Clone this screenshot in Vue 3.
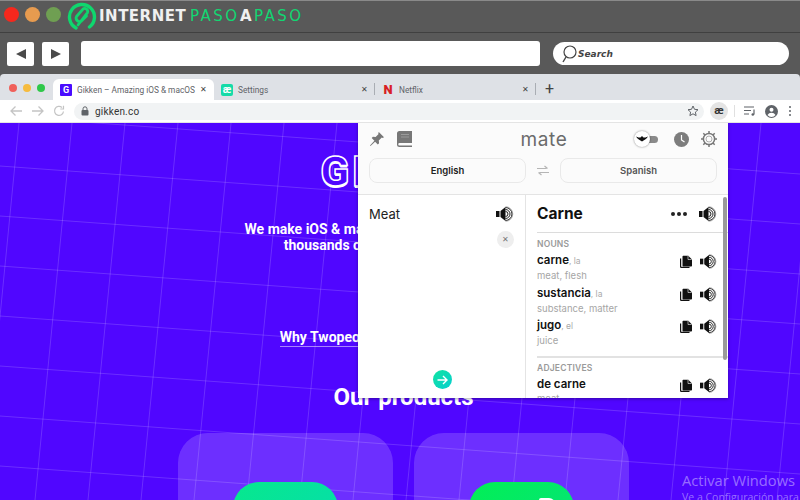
<script setup>
const tabs = [
  { title: 'Gikken – Amazing iOS & macOS', icon: 'G', kind: 'gikken', active: true },
  { title: 'Settings', icon: 'æ', kind: 'ae', active: false },
  { title: 'Netflix', icon: 'N', kind: 'netflix', active: false }
]

const nouns = [
  { word: 'carne', gender: 'la', meaning: 'meat, flesh' },
  { word: 'sustancia', gender: 'la', meaning: 'substance, matter' },
  { word: 'jugo', gender: 'el', meaning: 'juice' }
]

// slightly rotated grid behind the page
const gridV = Array.from({ length: 16 }, (_, i) => ({
  x1: 19 + i * 53,
  x2: 19 + i * 53 - 37
}))
const gridH = Array.from({ length: 9 }, (_, i) => ({
  y1: i * 50 - 7,
  y2: i * 50 + 51
}))
</script>

<template>
  <div class="screen">
    <svg class="defs" width="0" height="0">
      <symbol id="speaker" viewBox="0 0 18 18">
        <path d="M0 6h3.500v6H0z" fill="#111" />
        <path d="M4.500 6 9.500 2v14l-5-4z" fill="#111" />
        <path d="M9.500 6.500a2.500 2.500 0 0 1 0 5M9.500 4.500a4.500 4.500 0 0 1 0 9M9.500 2.500a6.500 6.500 0 0 1 0 13" fill="none" stroke="#222" stroke-width="1" />
        <path d="M9.500 1.700a7.300 7.300 0 0 1 0 14.600" fill="none" stroke="#777" stroke-width=".6" />
      </symbol>
      <symbol id="copy" viewBox="0 0 14 14">
        <path d="M1 3.500h1.200v8.300h8.300V13H2.200A1.200 1.200 0 0 1 1 11.800z" fill="#111" />
        <path d="M3.500 1.800c0-.6.500-1 1-1h4.800l3.700 3.700v6c0 .6-.5 1-1 1H4.500c-.6 0-1-.4-1-1z" fill="#111" />
        <path d="M9 1v3.500h3.500" fill="none" stroke="#fff" stroke-width=".6" />
      </symbol>
    </svg>

    <header class="site-bar">
      <div class="site-top">
        <span class="light red"></span>
        <span class="light orange"></span>
        <span class="light green"></span>
        <svg class="site-logo" width="30" height="30" viewBox="0 0 30 30">
          <path d="M9 26A12.500 12.500 0 1 1 22.500 25" fill="none" stroke="#0fd76e" stroke-width="3.400" stroke-linecap="round" />
          <path d="M11 23 20.500 10.500a3 3 0 0 0-4.500-3.500L9.500 14.500a3.500 3.500 0 0 0 5 4.500l5-5" fill="none" stroke="#0fd76e" stroke-width="2.800" stroke-linecap="round" />
        </svg>
        <span class="brand"><b class="w1">INTERNET</b><b class="g1">PASO</b><b class="w2">A</b><b class="g2">PASO</b></span>
      </div>
      <div class="site-tools">
        <button class="nav-btn"><svg width="12" height="12" viewBox="0 0 12 12"><path d="M11 1v10L1 6z" fill="#4a4a4a" /></svg></button>
        <button class="nav-btn fwd"><svg width="12" height="12" viewBox="0 0 12 12"><path d="M1 1v10l10-5z" fill="#4a4a4a" /></svg></button>
        <div class="site-address"></div>
        <div class="site-search">
          <svg width="18" height="20" viewBox="0 0 18 20"><circle cx="10" cy="8" r="6" fill="none" stroke="#444" stroke-width="1.200" /><path d="M6 13 3 18" stroke="#444" stroke-width="1.400" /></svg>
          <span>Search</span>
        </div>
      </div>
    </header>

    <section class="browser">
      <div class="tabstrip">
        <div class="mac-lights">
          <span class="dot d1"></span>
          <span class="dot d2"></span>
          <span class="dot d3"></span>
        </div>
        <div v-for="tab in tabs" :key="tab.title" class="tab" :class="{ active: tab.active }">
          <span class="fav" :class="tab.kind">{{ tab.icon }}</span>
          <span class="tab-title">{{ tab.title }}</span>
          <span class="tab-close">✕</span>
        </div>
        <span class="tab-plus">+</span>
      </div>

      <div class="urlbar">
        <svg class="ico-nav" width="14" height="12" viewBox="0 0 14 12"><path d="M13 6H2M6.500 1.500 2 6l4.500 4.500" fill="none" stroke="#c4c4c4" stroke-width="1.300" /></svg>
        <svg class="ico-nav" width="14" height="12" viewBox="0 0 14 12"><path d="M1 6h11M7.500 1.500 12 6l-4.500 4.500" fill="none" stroke="#c4c4c4" stroke-width="1.300" /></svg>
        <svg class="ico-nav" width="12" height="12" viewBox="0 0 12 12"><path d="M10.500 6.500A4.500 4.500 0 1 1 9 2.500M10.500 0.800v3.200H7.300" fill="none" stroke="#c4c4c4" stroke-width="1.200" /></svg>
        <div class="omnibox">
          <svg width="8" height="10" viewBox="0 0 8 10"><rect x="0.500" y="4" width="7" height="5.500" rx="1" fill="#5f6368" /><path d="M2 4V2.800a2 2 0 0 1 4 0V4" fill="none" stroke="#5f6368" /></svg>
          <span class="url">gikken.co</span>
          <svg class="star" width="12" height="12" viewBox="0 0 12 12"><path d="m6 1 1.500 3.300 3.500.4-2.600 2.400.7 3.500L6 8.800l-3.100 1.800.7-3.500L1 4.700l3.500-.4z" fill="none" stroke="#5f6368" /></svg>
        </div>
        <span class="ext-chip">æ</span>
        <span class="bar-sep"></span>
        <svg width="12" height="10" viewBox="0 0 12 10"><path d="M0 1h10M0 4.500h7M0 8h5" stroke="#5f6368" stroke-width="1.200" /><path d="M10 3.500V8.500" stroke="#5f6368" stroke-width="1.200" /><circle cx="8.800" cy="8.500" r="1.300" fill="#5f6368" /></svg>
        <svg class="avatar" width="13" height="13" viewBox="0 0 13 13"><circle cx="6.500" cy="6.500" r="6.500" fill="#5f6368" /><circle cx="6.500" cy="4.800" r="2" fill="#fff" /><path d="M2.500 10a4.600 4.600 0 0 1 8 0 5 5 0 0 1-8 0z" fill="#fff" /></svg>
        <span class="menu-dots"><i></i><i></i><i></i></span>
      </div>

      <main class="page">
        <svg class="grid" width="800" height="377" viewBox="0 0 800 377">
          <line v-for="(l, i) in gridV" :key="'v' + i" :x1="l.x1" y1="0" :x2="l.x2" y2="377" />
          <line v-for="(l, i) in gridH" :key="'h' + i" x1="0" :y1="l.y1" x2="800" :y2="l.y2" />
        </svg>

        <div class="page-body">
          <div class="gikken-logo">GIKKEN</div>
          <p class="intro">We make iOS &amp; macOS apps that are truly loved by<br />thousands of people all over the world</p>
          <a class="why">Why Twopeople is now officially Gikken</a>
          <h2>Our products</h2>
          <div class="cards">
            <div class="card"><div class="app-icon teal"></div></div>
            <div class="card"><div class="app-icon lime"><span class="mark"></span></div></div>
          </div>
        </div>

        <div class="activate">
          <div class="a1">Activar Windows</div>
          <div class="a2">Ve a Configuración para</div>
        </div>

        <!-- extension popup -->
        <div class="popup">
          <div class="pop-head">
            <div class="pop-top">
              <svg class="pin" width="16" height="16" viewBox="0 0 16 16"><path d="M9.800 1 15 6.200l-1.400.7-.8-.4-3 3 .3 2.700-1.300 1.200-2.700-2.700L1.500 15l-.5-.5 4.400-4.800-2.700-2.700 1.200-1.300 2.700.3 3-3-.4-.8z" fill="#777" /></svg>
              <svg class="book" width="15" height="16" viewBox="0 0 15 16"><path d="M0 2.500A2.500 2.500 0 0 1 2.500 0H15v12H2.500a1.200 1.200 0 0 0 0 2.500H15V16H2.500A2.500 2.500 0 0 1 0 13.500z" fill="#777" /><path d="M4 3.500h8M4 6h8" stroke="#aaa" stroke-width=".7" /></svg>
              <span class="mate">mate</span>
              <span class="toggle">
                <span class="knob"><svg width="12" height="6" viewBox="0 0 12 6"><path d="M0 0.500c2 1 3 1 4.500 1L6 0l1.500 1.500c1.500 0 2.500 0 4.500-1C10.500 3 8 4 6 5.500 4 4 1.500 3 0 .5z" fill="#111" /></svg></span>
                <span class="rail"></span>
              </span>
              <svg class="clock" width="15" height="15" viewBox="0 0 15 15"><circle cx="7.500" cy="7.500" r="7.500" fill="#7d7d7d" /><path d="M7.500 3v5l3 2" fill="none" stroke="#fff" stroke-width="1.200" /></svg>
              <svg class="gear" width="16" height="16" viewBox="0 0 16 16"><circle cx="8" cy="8" r="5.600" fill="none" stroke="#777" stroke-width="1.500" /><circle cx="8" cy="8" r="3" fill="none" stroke="#999" stroke-width=".8" /><path d="M8 0v2.500M8 13.500V16M0 8h2.500M13.500 8H16M2.300 2.300 4 4M12 12l1.700 1.700M2.300 13.700 4 12M12 4l1.700-1.700" stroke="#777" stroke-width="1.500" /></svg>
            </div>
            <div class="lang-row">
              <button class="lang strong">English</button>
              <svg class="swap" width="14" height="11" viewBox="0 0 14 11"><path d="M1 3.500h9.500M8.500 1l3 2.500M13 7.500H3.500M5.500 10l-3-2.500" fill="none" stroke="#b5b5b5" stroke-width="1.200" /></svg>
              <button class="lang">Spanish</button>
            </div>
          </div>

          <div class="pop-body">
            <div class="source">
              <div class="source-top">
                <span class="meat">Meat</span>
                <svg width="18" height="18"><use href="#speaker" /></svg>
              </div>
              <div class="clear"><span>✕</span></div>
              <div class="go">
                <span class="go-btn"><svg width="11" height="10" viewBox="0 0 11 10"><path d="M0.500 5h9M6 1l4 4-4 4" fill="none" stroke="#fff" stroke-width="1.400" /></svg></span>
              </div>
            </div>

            <div class="result">
              <div class="result-top">
                <span class="carne">Carne</span>
                <span class="more"><i></i><i></i><i></i></span>
                <svg width="18" height="18"><use href="#speaker" /></svg>
              </div>
              <div class="group first">
                <div class="group-label">NOUNS</div>
                <div v-for="n in nouns" :key="n.word" class="entry">
                  <div class="entry-text">
                    <div class="word">{{ n.word }}<small>, {{ n.gender }}</small></div>
                    <div class="meaning">{{ n.meaning }}</div>
                  </div>
                  <svg class="cp" width="14" height="14"><use href="#copy" /></svg>
                  <svg class="spk-s" width="17" height="17"><use href="#speaker" /></svg>
                </div>
              </div>
              <div class="group second">
                <div class="group-label">ADJECTIVES</div>
                <div class="entry">
                  <div class="entry-text">
                    <div class="word">de carne</div>
                    <div class="meaning">meat</div>
                  </div>
                  <svg class="cp" width="14" height="14"><use href="#copy" /></svg>
                  <svg class="spk-s" width="17" height="17"><use href="#speaker" /></svg>
                </div>
              </div>
              <span class="scroll-thumb"></span>
            </div>
          </div>
        </div>
      </main>
    </section>
  </div>
</template>

<style>
html,
body {
  margin: 0;
  overflow: hidden;
}
</style>

<style scoped>
.screen {
  width: 800px;
  height: 500px;
  overflow: hidden;
  display: flex;
  flex-direction: column;
  font-family: Inter, "Liberation Sans", sans-serif;
  background: #595959;
}

.defs {
  position: absolute;
}

/* outer site chrome */
.site-bar {
  height: 74px;
  flex: none;
  background: #595959;
}

.site-top {
  height: 33px;
  box-sizing: border-box;
  border-bottom: 1px solid #404040;
  border-top: 1px solid #8a8a8a;
  display: flex;
  align-items: center;
  padding-left: 4px;
}

.light {
  width: 15px;
  height: 15px;
  border-radius: 50%;
  margin-right: 6px;
  margin-top: -5px;
}

.red { background: #f5281d; }
.orange { background: #e79b4f; }
.green { background: #6f9f52; }

.site-logo {
  margin-right: 2px;
}

.brand {
  font-family: "DejaVu Sans", sans-serif;
  font-size: 15px;
  line-height: 18px;
  display: flex;
  margin-top: -1px;
}

.brand b {
  display: block;
}

.w1 { color: #f0f0f0; font-weight: 700; letter-spacing: .5px; width: 91px; white-space: nowrap; }
.g1 { color: #12d672; font-weight: 400; letter-spacing: 2.500px; width: 50px; }
.w2 { color: #f0f0f0; font-weight: 700; width: 14px; }
.g2 { color: #12d672; font-weight: 400; letter-spacing: 2.500px; }

.site-tools {
  height: 41px;
  display: flex;
  align-items: center;
  padding-left: 7px;
}

.nav-btn {
  width: 27px;
  height: 24px;
  border: 0;
  padding: 0;
  background: #fff;
  border-radius: 2px;
  display: flex;
  align-items: center;
  justify-content: center;
}

.nav-btn.fwd {
  margin-left: 8px;
}

.site-address {
  width: 459px;
  height: 25px;
  margin-left: 12px;
  background: #fff;
  border-radius: 3px;
}

.site-search {
  width: 236px;
  height: 23px;
  margin-left: 13px;
  background: #fff;
  border-radius: 12px;
  display: flex;
  align-items: center;
  padding-left: 7px;
  box-sizing: border-box;
  font: italic 700 9px "DejaVu Sans", sans-serif;
  color: #444;
}

/* browser */
.browser {
  flex: 1;
  display: flex;
  flex-direction: column;
  min-height: 0;
  border-radius: 4px 4px 0 0;
  overflow: hidden;
}

.tabstrip {
  height: 26px;
  flex: none;
  background: #dee1e6;
  display: flex;
  align-items: flex-end;
  font-family: Roboto, "Liberation Sans", sans-serif;
}

.mac-lights {
  width: 53px;
  height: 26px;
  display: flex;
  align-items: center;
  padding-left: 9px;
  box-sizing: border-box;
  gap: 6px;
  padding-top: 1px;
}

.dot {
  width: 8px;
  height: 8px;
  border-radius: 50%;
}

.d1 { background: #f0605a; }
.d2 { background: #f6bb3e; }
.d3 { background: #2fc84a; }

.tab {
  width: 161px;
  height: 21px;
  box-sizing: border-box;
  display: flex;
  align-items: center;
  padding: 0 6px 0 7px;
  font-size: 8.300px;
  color: #5f6368;
  border-radius: 6px 6px 0 0;
  position: relative;
}

.tab.active {
  background: #fff;
}

.tab:not(.active)::after {
  content: "";
  position: absolute;
  right: 0;
  top: 4px;
  width: 1px;
  height: 12px;
  background: #a9adb3;
}

.fav {
  width: 12px;
  height: 12px;
  flex: none;
  margin-right: 5px;
  font-size: 9px;
  font-weight: 700;
  line-height: 12px;
  text-align: center;
  color: #fff;
}

.fav.gikken { background: #4a0cff; border-radius: 1px; }
.fav.ae { background: #14dba8; border-radius: 2px; font-size: 10px; }
.fav.netflix { background: transparent; color: #d81f26; font-size: 13px; font-weight: 900; }

.tab-title {
  flex: 1;
  min-width: 0;
  white-space: nowrap;
}

.tab-close {
  width: 10px;
  flex: none;
  font-size: 8px;
  color: #444;
  text-align: center;
  margin-left: 7px;
}

.tab-plus {
  margin-left: 9px;
  height: 21px;
  font-size: 16px;
  line-height: 20px;
  color: #444;
}

.urlbar {
  height: 23px;
  flex: none;
  background: #fff;
  display: flex;
  align-items: center;
  padding-left: 9px;
  box-sizing: border-box;
  border-bottom: 1px solid #e4e4e4;
}

.ico-nav {
  margin-right: 8px;
}

.omnibox {
  width: 630px;
  height: 17px;
  margin-left: 1px;
  border-radius: 9px;
  background: #f1f3f4;
  display: flex;
  align-items: center;
  padding: 0 5px 0 7px;
  box-sizing: border-box;
}

.url {
  font: 10px Roboto, "Liberation Sans", sans-serif;
  color: #333;
  margin-left: 6px;
  flex: 1;
  letter-spacing: .2px;
}

.ext-chip {
  width: 18px;
  height: 18px;
  margin-left: 6px;
  border-radius: 50%;
  background: #e4e4e4;
  font: 700 11px/17px Roboto, sans-serif;
  text-align: center;
  color: #333;
}

.bar-sep {
  width: 1px;
  height: 12px;
  background: #e0e0e0;
  margin: 0 9px 0 6px;
}

.avatar {
  margin-left: 9px;
}

.menu-dots {
  margin-left: 11px;
  display: flex;
  flex-direction: column;
  gap: 2px;
}

.menu-dots i {
  width: 2px;
  height: 2px;
  border-radius: 50%;
  background: #5f6368;
}

/* page */
.page {
  flex: 1;
  position: relative;
  overflow: hidden;
  background: #5006ff;
}

.grid {
  position: absolute;
  left: 0;
  top: 0;
}

.grid line {
  stroke: rgba(255, 255, 255, .16);
  stroke-width: 1;
}

.page-body {
  position: relative;
  width: 807px;
  display: flex;
  flex-direction: column;
  align-items: center;
  color: #fff;
  font-family: Roboto, "Liberation Sans", sans-serif;
}

.gikken-logo {
  margin-top: 25px;
  height: 48px;
  font-size: 42px;
  font-weight: 900;
  line-height: 48px;
  text-align: center;
  letter-spacing: 3px;
  white-space: nowrap;
  color: #5006ff;
  -webkit-text-stroke: 1.500px #fff;
  text-shadow: 0 2px 0 #fff;
}

.intro {
  margin: 25px 0 0;
  font-size: 14px;
  font-weight: 700;
  line-height: 16px;
  text-align: center;
  white-space: nowrap;
}

.why {
  margin-top: 76px;
  font-size: 14px;
  font-weight: 700;
  line-height: 17px;
  white-space: nowrap;
  border-bottom: 1px solid rgba(255, 255, 255, .5);
}

h2 {
  margin: 36px 0 0;
  font: 700 24px/28px "Liberation Sans Narrow", Roboto, sans-serif;
}

.cards {
  margin-top: 22px;
  display: flex;
  gap: 21px;
}

.card {
  width: 215px;
  height: 160px;
  border-radius: 30px;
  background: rgba(255, 255, 255, .17);
  display: flex;
  justify-content: center;
  padding-top: 49px;
  box-sizing: border-box;
}

.app-icon {
  width: 105px;
  height: 105px;
  border-radius: 26px;
  position: relative;
}

.teal { background: linear-gradient(135deg, #07e88d, #05dab5); }
.lime { background: linear-gradient(135deg, #02ef55, #06e082); }

.mark {
  position: absolute;
  left: 70px;
  top: 16px;
  width: 16px;
  height: 12px;
  background: #fff;
  border-radius: 2px 6px 0 0;
}

.activate {
  position: absolute;
  left: 682px;
  top: 347px;
  white-space: nowrap;
  font-family: "Open Sans", "Liberation Sans", sans-serif;
  color: rgba(255, 255, 255, .42);
}

.a1 {
  font-size: 14.700px;
  line-height: 20px;
}

.a2 {
  font-size: 10.500px;
  line-height: 15px;
}

/* popup */
.popup {
  position: absolute;
  left: 358px;
  top: 0;
  width: 370px;
  height: 275px;
  background: #fff;
  box-shadow: 0 1px 3px rgba(0, 0, 0, .35);
  display: flex;
  flex-direction: column;
  overflow: hidden;
}

.pop-head {
  height: 72px;
  flex: none;
  box-sizing: border-box;
  background: #fbfbfb;
  border-bottom: 1px solid #e4e4e4;
  padding: 0 11px;
}

.pop-top {
  height: 35px;
  box-sizing: border-box;
  padding-bottom: 3px;
  display: flex;
  align-items: center;
}

.book {
  margin-left: 12px;
}

.mate {
  flex: 1;
  text-align: center;
  font-size: 19px;
  color: #6b6b6b;
  letter-spacing: .6px;
  padding-left: 78px;
}

.toggle {
  display: flex;
  align-items: center;
  margin-left: 36px;
  width: 25px;
  position: relative;
}

.knob {
  width: 16px;
  height: 16px;
  border-radius: 50%;
  background: #fff;
  box-shadow: 0 0 2px rgba(0, 0, 0, .5);
  display: flex;
  align-items: center;
  justify-content: center;
  position: relative;
  z-index: 1;
}

.rail {
  width: 12px;
  height: 7px;
  margin-left: -4px;
  border-radius: 4px;
  background: #8a8a8a;
}

.clock {
  margin-left: 15px;
}

.gear {
  margin-left: 12px;
}

.lang-row {
  display: flex;
  align-items: center;
}

.lang {
  width: 157px;
  height: 25px;
  border: 1px solid #e9e9e9;
  border-radius: 8px;
  background: #fbfbfb;
  font: 600 9.500px Inter, sans-serif;
  color: #555;
  padding: 0;
}

.lang.strong {
  color: #222;
}

.swap {
  margin: 0 10px;
}

.pop-body {
  flex: 1;
  display: flex;
  min-height: 0;
}

.source {
  width: 168px;
  flex: none;
  box-sizing: border-box;
  border-right: 1px solid #e4e4e4;
  display: flex;
  flex-direction: column;
  padding: 10px 11px;
}

.source-top {
  display: flex;
  align-items: center;
  justify-content: space-between;
  height: 18px;
}

.meat {
  font-size: 13px;
  color: #222;
}

.clear {
  align-self: flex-end;
  width: 17px;
  height: 17px;
  margin-top: 8px;
  border-radius: 50%;
  background: #eeeeee;
  color: #777;
  font-size: 8px;
  line-height: 17px;
  text-align: center;
}

.go {
  margin-top: auto;
  display: flex;
  justify-content: center;
  padding-left: 1px;
  margin-bottom: -1px;
}

.go-btn {
  width: 19px;
  height: 19px;
  border-radius: 50%;
  background: linear-gradient(135deg, #0fe3a0, #08cfd0);
  display: flex;
  align-items: center;
  justify-content: center;
}

.result {
  flex: 1;
  padding: 0 11px;
  position: relative;
  overflow: hidden;
  min-width: 0;
}

.result-top {
  height: 37px;
  display: flex;
  align-items: center;
  box-sizing: border-box;
}

.carne {
  flex: 1;
  font-size: 15.500px;
  font-weight: 700;
  color: #111;
}

.more {
  display: flex;
  gap: 2px;
  margin-right: 12px;
}

.more i {
  width: 4px;
  height: 4px;
  border-radius: 50%;
  background: #222;
}

.group {
  border-top: 1px solid #dcdcdc;
  margin-right: -11px;
  padding: 6px 11px 5px 0;
}

.group.second {
  border-top: 2px solid #e2e2e2;
  padding-top: 5px;
}

.group-label {
  font-size: 8.500px;
  font-weight: 600;
  line-height: 11px;
  color: #9a9a9a;
  letter-spacing: .2px;
  margin-bottom: 3px;
}

.entry {
  display: flex;
  align-items: flex-start;
  height: 32.500px;
}

.entry-text {
  flex: 1;
  min-width: 0;
}

.word {
  font-size: 11.500px;
  font-weight: 600;
  line-height: 15px;
  color: #111;
}

.word small {
  font-size: 8.500px;
  font-weight: 400;
  color: #aaa;
}

.meaning {
  font-size: 9.500px;
  line-height: 14px;
  color: #a6a6a6;
}

.cp {
  margin-top: 2px;
  margin-right: 7px;
}

.spk-s {
  margin-top: 0;
}

.scroll-thumb {
  position: absolute;
  right: 1px;
  top: 2px;
  width: 4px;
  height: 163px;
  border-radius: 2px;
  background: #9a9a9a;
}
</style>
